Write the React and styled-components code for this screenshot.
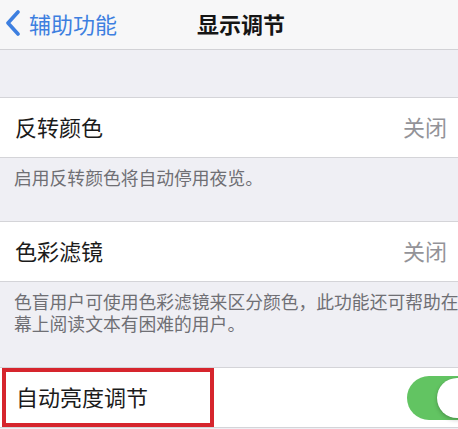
import React from 'react'
import styled, { createGlobalStyle } from 'styled-components'

const GlobalStyle = createGlobalStyle`
  html, body {
    margin: 0;
    padding: 0;
    overflow: hidden;
    background: #efeff4;
  }
  body {
    font-family: "Noto Sans CJK SC", "Noto Sans", sans-serif;
    -webkit-font-smoothing: antialiased;
  }
`

const Screen = styled.div`
  width: 500px;
  min-height: 429px;
  background: #efeff4;
`

const NavBar = styled.header`
  box-sizing: border-box;
  height: 50px;
  display: flex;
  align-items: center;
  padding: 0 0 3px 5px;
  background: #f7f7f8;
  border-bottom: 1px solid #d2d2d6;
`

const BackButton = styled.button`
  display: flex;
  align-items: center;
  gap: 8px;
  padding: 0;
  border: 0;
  background: none;
  color: #3d7fe0;
  font: inherit;
  font-size: 22px;
  line-height: 1;
  cursor: pointer;
`

const Title = styled.h1`
  margin: 0 0 0 80px;
  font-size: 22px;
  font-weight: 600;
  line-height: 1;
  color: #151515;
`

const Spacer = styled.div`
  height: 47px;
`

const Group = styled.section`
  background: #fff;
  border-top: 1px solid #d4d4d8;
  border-bottom: 1px solid #d4d4d8;
`

const Row = styled.div`
  position: relative;
  box-sizing: border-box;
  height: 59px;
  display: flex;
  align-items: center;
  justify-content: space-between;
  padding: 0 21px 3px ${p => p.$inset || 15}px;
`

const Label = styled.span`
  font-size: 22px;
  line-height: 1;
  color: #1b1b1b;
`

const Value = styled.span`
  margin-right: 32px;
  font-size: 22px;
  line-height: 1;
  color: #939398;
`

const Footer = styled.p`
  margin: 0;
  padding: 8px 14px 33px;
  font-size: 17.8px;
  line-height: 22px;
  color: #6f6f74;
  white-space: nowrap;
`

const Toggle = styled.span`
  position: relative;
  display: block;
  width: 72px;
  height: 44px;
  margin-top: 3px;
  border-radius: 22px;
  background: ${p => (p.$on ? '#62c462' : '#e5e5ea')};
  &::after {
    content: '';
    position: absolute;
    top: 2px;
    left: ${p => (p.$on ? '30px' : '2px')};
    width: 40px;
    height: 40px;
    border-radius: 50%;
    background: #fff;
    box-shadow: 0 2px 4px rgba(0, 0, 0, 0.22), 0 0 1px rgba(0, 0, 0, 0.2);
  }
`

const Highlight = styled.span`
  position: absolute;
  left: 2px;
  top: 0;
  width: 212px;
  height: 59px;
  box-sizing: border-box;
  border: 4px solid #d6252d;
  pointer-events: none;
`

function BackChevron() {
  return (
    <svg width="16" height="26" viewBox="0 0 16 26">
      <path d="M13 2 L3 13 L13 24" fill="none" stroke="currentColor" strokeWidth="3.6" strokeLinecap="round" strokeLinejoin="round" />
    </svg>
  )
}

export default function App() {
  return (
    <Screen>
      <GlobalStyle />
      <NavBar>
        <BackButton>
          <BackChevron />
          辅助功能
        </BackButton>
        <Title>显示调节</Title>
      </NavBar>
      <Spacer />
      <Group>
        <Row>
          <Label>反转颜色</Label>
          <Value>关闭</Value>
        </Row>
      </Group>
      <Footer>启用反转颜色将自动停用夜览。</Footer>
      <Group>
        <Row>
          <Label>色彩滤镜</Label>
          <Value>关闭</Value>
        </Row>
      </Group>
      <Footer>
        色盲用户可使用色彩滤镜来区分颜色，此功能还可帮助在屏
        <br />
        幕上阅读文本有困难的用户。
      </Footer>
      <Group>
        <Row $inset={16}>
          <Label>自动亮度调节</Label>
          <Toggle $on />
          <Highlight />
        </Row>
      </Group>
    </Screen>
  )
}
